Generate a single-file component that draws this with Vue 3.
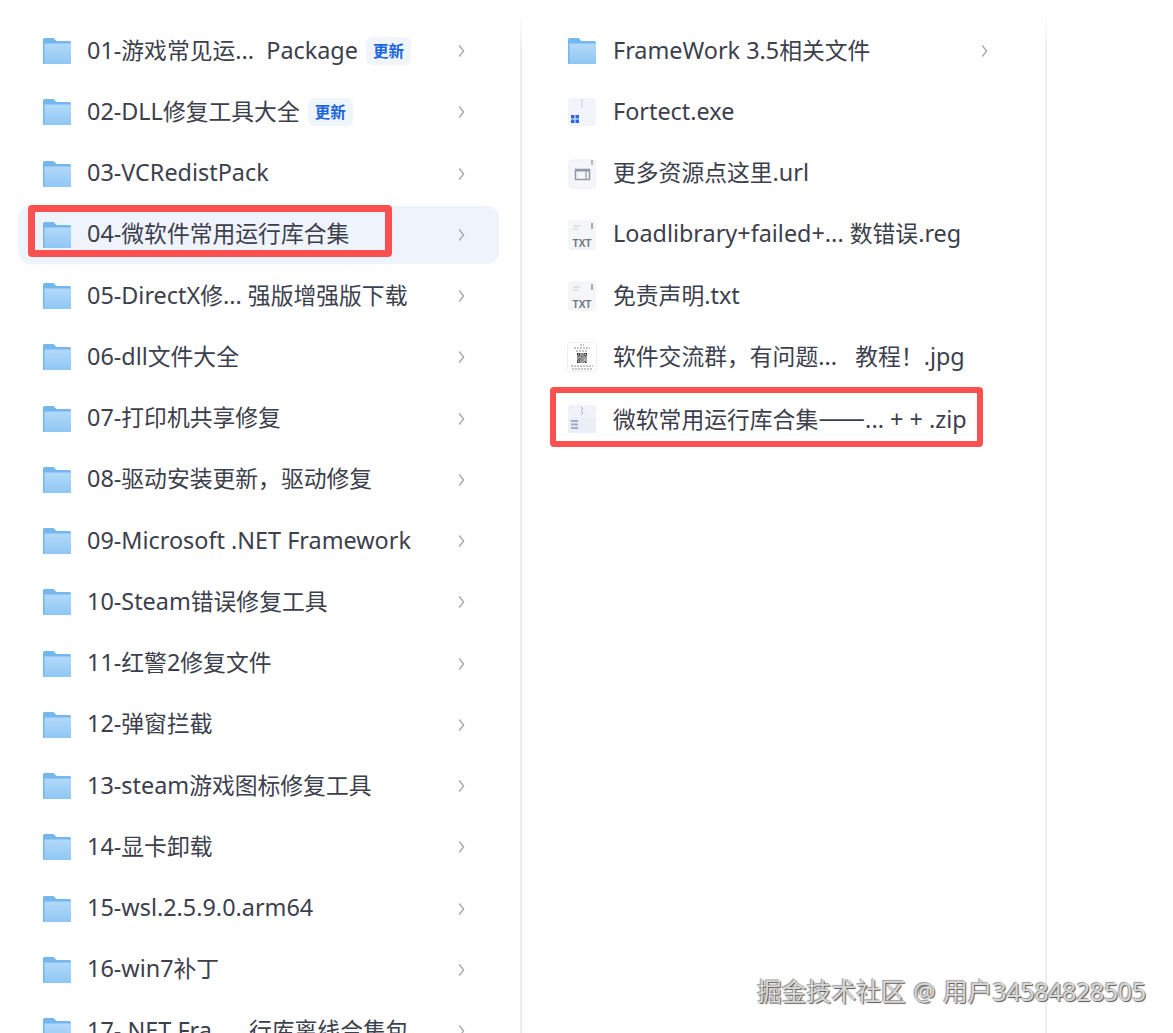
<script setup>
const left = [
  { name: '01-游戏常见运...  Package', badge: true },
  { name: '02-DLL修复工具大全', badge: true },
  { name: '03-VCRedistPack' },
  { name: '04-微软件常用运行库合集', active: true },
  { name: '05-DirectX修... 强版增强版下载' },
  { name: '06-dll文件大全' },
  { name: '07-打印机共享修复' },
  { name: '08-驱动安装更新，驱动修复' },
  { name: '09-Microsoft .NET Framework' },
  { name: '10-Steam错误修复工具' },
  { name: '11-红警2修复文件' },
  { name: '12-弹窗拦截' },
  { name: '13-steam游戏图标修复工具' },
  { name: '14-显卡卸载' },
  { name: '15-wsl.2.5.9.0.arm64' },
  { name: '16-win7补丁' },
  { name: '17-.NET Fra...   行库离线合集包' }
]
const right = [
  { name: 'FrameWork 3.5相关文件', type: 'folder', arrow: true },
  { name: 'Fortect.exe', type: 'exe' },
  { name: '更多资源点这里.url', type: 'url' },
  { name: 'Loadlibrary+failed+... 数错误.reg', type: 'txt' },
  { name: '免责声明.txt', type: 'txt' },
  { name: '软件交流群，有问题...   教程！.jpg', type: 'jpg' },
  { name: '微软常用运行库合集——... + + .zip', type: 'zip' }
]
const parts = (name) =>
  name
    .split(/(—+|[\u3000-\u9fff\uff00-\uffef]+)/)
    .filter(Boolean)
    .map((text) => ({
      text,
      kind: text[0] === '—' ? 'dash' : /[\u3000-\u9fff\uff00-\uffef]/.test(text) ? 'cjk' : 'lat'
    }))
const qr = [
  [0,0],[1,0],[2,0],[4,0],[6,0],[7,0],[8,0],
  [0,1],[2,1],[3,1],[5,1],[6,1],[8,1],
  [0,2],[1,2],[2,2],[4,2],[6,2],[7,2],[8,2],
  [1,3],[3,3],[4,3],[5,3],[7,3],
  [0,4],[2,4],[4,4],[6,4],[8,4],
  [1,5],[2,5],[3,5],[5,5],[7,5],
  [0,6],[1,6],[2,6],[4,6],[5,6],[8,6],
  [0,7],[2,7],[3,7],[6,7],[7,7],
  [0,8],[1,8],[2,8],[4,8],[5,8],[7,8],[8,8]
]
</script>

<template>
  <main class="page">
    <section class="column column-left">
      <div v-for="item in left" :key="item.name" class="row" :class="{ active: item.active }">
        <svg class="icon" width="30" height="28" viewBox="0 0 30 28">
          <defs>
            <linearGradient :id="'fl' + item.name.slice(0, 2)" x1="0" y1="0" x2="0" y2="1">
              <stop offset="0" stop-color="#b3d9f9" />
              <stop offset="1" stop-color="#8fc7f4" />
            </linearGradient>
          </defs>
          <path d="M1 2.500Q1 1 2.500 1H11.500L14.500 4H27.500Q29 4 29 5.500V26Q29 27 28 27H2Q1 27 1 26Z" fill="#74b6ee" />
          <path d="M2.500 6.500H29V26Q29 27 28 27H2.500Z" :fill="'url(#fl' + item.name.slice(0, 2) + ')'" />
        </svg>
        <span class="name"><span v-for="(p, i) in parts(item.name)" :key="i" :class="p.kind">{{ p.text }}</span></span>
        <span v-if="item.badge" class="badge">更新</span>
        <svg class="chevron" width="7" height="14" viewBox="0 0 7 14">
          <path d="M1.200 1.500L5.600 7L1.200 12.500" fill="none" stroke="#a2a6af" stroke-width="1.300" />
        </svg>
      </div>
      <div class="mark mark-left"></div>
    </section>

    <section class="column column-right">
      <div v-for="item in right" :key="item.name" class="row">
        <svg v-if="item.type === 'folder'" class="icon" width="30" height="28" viewBox="0 0 30 28">
          <defs>
            <linearGradient id="fr" x1="0" y1="0" x2="0" y2="1">
              <stop offset="0" stop-color="#b3d9f9" />
              <stop offset="1" stop-color="#8fc7f4" />
            </linearGradient>
          </defs>
          <path d="M1 2.500Q1 1 2.500 1H11.500L14.500 4H27.500Q29 4 29 5.500V26Q29 27 28 27H2Q1 27 1 26Z" fill="#74b6ee" />
          <path d="M2.500 6.500H29V26Q29 27 28 27H2.500Z" fill="url(#fr)" />
        </svg>
        <svg v-else-if="item.type === 'exe'" class="icon" width="30" height="30" viewBox="0 0 30 30">
          <path d="M4 1H26Q29 1 29 4V26Q29 29 26 29H4Q1 29 1 26V4Q1 1 4 1Z" fill="#f2f4fb" />
          <path d="M15 2V11" stroke="#c6c9d4" stroke-width="1" />
          <path d="M4 18H7.500V21.500H4ZM8.500 18H12V21.500H8.500ZM4 22.500H7.500V26H4ZM8.500 22.500H12V26H8.500Z" fill="#2f66e0" />
        </svg>
        <svg v-else-if="item.type === 'url'" class="icon" width="30" height="30" viewBox="0 0 30 30">
          <path d="M4 1H26Q28 1 28 3V27Q28 29 26 29H4Q2 29 2 27V3Q2 1 4 1Z" fill="#f5f6fa" stroke="#eceef3" />
          <rect x="8.500" y="10.500" width="14" height="10" fill="none" stroke="#9298ab" stroke-width="1.500" />
          <path d="M8.500 11.500H22.500" stroke="#9298ab" stroke-width="2" />
          <path d="M19 11V20" stroke="#9298ab" stroke-width="1.200" />
          <path d="M25 1V6" stroke="#8b8f9c" stroke-width="1.200" />
        </svg>
        <svg v-else-if="item.type === 'txt'" class="icon" width="30" height="30" viewBox="0 0 30 30">
          <path d="M4 1H26Q28 1 28 3V27Q28 29 26 29H4Q2 29 2 27V3Q2 1 4 1Z" fill="#f5f6f8" stroke="#eeeff2" />
          <path d="M6 6H13M6 9H11" stroke="#d9dbe0" stroke-width="1.400" />
          <path d="M25 3V9" stroke="#868a94" stroke-width="1.400" />
          <text class="txt-label" x="5.500" y="27" textLength="19" lengthAdjust="spacingAndGlyphs">TXT</text>
        </svg>
        <svg v-else-if="item.type === 'jpg'" class="icon" width="30" height="30" viewBox="0 0 30 30">
          <rect x="0.500" y="0.500" width="29" height="29" rx="2" fill="#fff" stroke="#eef0f3" />
          <path d="M13 3H17M7 6H23M9 9H21M4 24H26M5 27H25" stroke="#8e8e8e" stroke-width="1" stroke-dasharray="2 1" />
          <rect v-for="(c, i) in qr" :key="i" :x="10 + c[0] * 1.100" :y="11 + c[1] * 1.100" width="1.100" height="1.100" fill="#26282c" />
        </svg>
        <svg v-else class="icon" width="30" height="30" viewBox="0 0 30 30">
          <path d="M4 1H26Q29 1 29 4V27Q29 29 27 29H3Q1 29 1 27V4Q1 1 4 1Z" fill="#f0f2fa" />
          <path d="M1 14L8 2M29 14L22 2" stroke="#f8f9fd" stroke-width="1" />
          <path d="M1 14H29V27Q29 29 27 29H3Q1 29 1 27Z" fill="#ebeef7" />
          <path d="M14 3L16 5L14 7L16 9L14 11" fill="none" stroke="#a9adbd" stroke-width="1" />
          <path d="M4 17H11M4 20.500H11M4 24H11" stroke="#a5abc0" stroke-width="2" />
        </svg>
        <span class="name"><span v-for="(p, i) in parts(item.name)" :key="i" :class="p.kind">{{ p.text }}</span></span>
        <svg v-if="item.arrow" class="chevron" width="7" height="14" viewBox="0 0 7 14">
          <path d="M1.200 1.500L5.600 7L1.200 12.500" fill="none" stroke="#a2a6af" stroke-width="1.300" />
        </svg>
      </div>
      <div class="mark mark-right"></div>
    </section>

    <div class="watermark">掘金技术社区 @ 用户<span class="digits">34584828505</span></div>
  </main>
</template>

<style scoped>
.page {
  position: relative;
  display: flex;
  width: 1173px;
  height: 1033px;
  overflow: hidden;
  background: #fff;
  font-family: "Noto Sans", "Noto Sans CJK SC", sans-serif;
  color: #3c404c;
}
.column {
  position: relative;
  display: flex;
  flex-direction: column;
  gap: 3.25px;
  box-sizing: border-box;
  padding-top: 22px;
  margin-top: 14px;
  height: 1019px;
  flex: none;
  border-right: 2px solid #eeeef0;
  border-image: linear-gradient(#fff, #eeeef0 36px) 1;
}
.column > .row:first-child {
  margin-top: -14px;
}
.column-left {
  width: 522px;
  padding-left: 18px;
  padding-right: 21px;
}
.column-right {
  width: 525px;
  padding-left: 29px;
  padding-right: 39px;
}
.row {
  display: flex;
  align-items: center;
  flex: none;
  height: 58px;
  padding-left: 25px;
  padding-right: 34px;
  border-radius: 12px;
  box-sizing: border-box;
}
.column-right .row {
  padding-left: 17px;
  padding-right: 18px;
}
.column-right .icon {
  margin-right: 16px;
}
.row.active {
  background: #eff3fc;
}
.icon {
  flex: none;
  margin-right: 15px;
  margin-left: -1px;
}
.name {
  line-height: 32px;
  white-space: pre;
}
.lat {
  font-size: 23.4px;
}
.cjk {
  font-family: "Noto Sans CJK SC", sans-serif;
  font-size: 22.8px;
}
.dash {
  font-family: "Noto Sans CJK SC", sans-serif;
  font-size: 28px;
}
.badge {
  margin-left: 8px;
  width: 45px;
  height: 28px;
  border-radius: 6px;
  background: #f0f4fb;
  color: #1a66e0;
  font-size: 15.5px;
  font-weight: 700;
  line-height: 28px;
  text-align: center;
}
.chevron {
  flex: none;
  margin-left: auto;
}
.txt-label {
  font-family: "Liberation Sans", sans-serif;
  font-size: 11.5px;
  font-weight: 700;
  fill: #6f7480;
}
.mark {
  position: absolute;
  border-style: solid;
  border-color: #fb5050;
  border-radius: 4px;
  box-sizing: border-box;
  pointer-events: none;
}
.mark-left {
  left: 28px;
  top: 191px;
  width: 364px;
  height: 52px;
  border-width: 7px;
}
.mark-right {
  left: 28px;
  top: 373px;
  width: 433px;
  height: 60px;
  border-width: 6px;
}
.watermark {
  position: absolute;
  left: 757px;
  top: 974px;
  font-size: 24.8px;
  line-height: 34px;
  word-spacing: 1px;
  white-space: nowrap;
  color: #d8d8d8;
  text-shadow: 1px 1px 1px #555, -1px -1px 1px #999;
}
.digits {
  letter-spacing: -0.25px;
}
</style>
<style>
html, body { margin: 0; background: #fff; overflow: hidden; }
</style>
